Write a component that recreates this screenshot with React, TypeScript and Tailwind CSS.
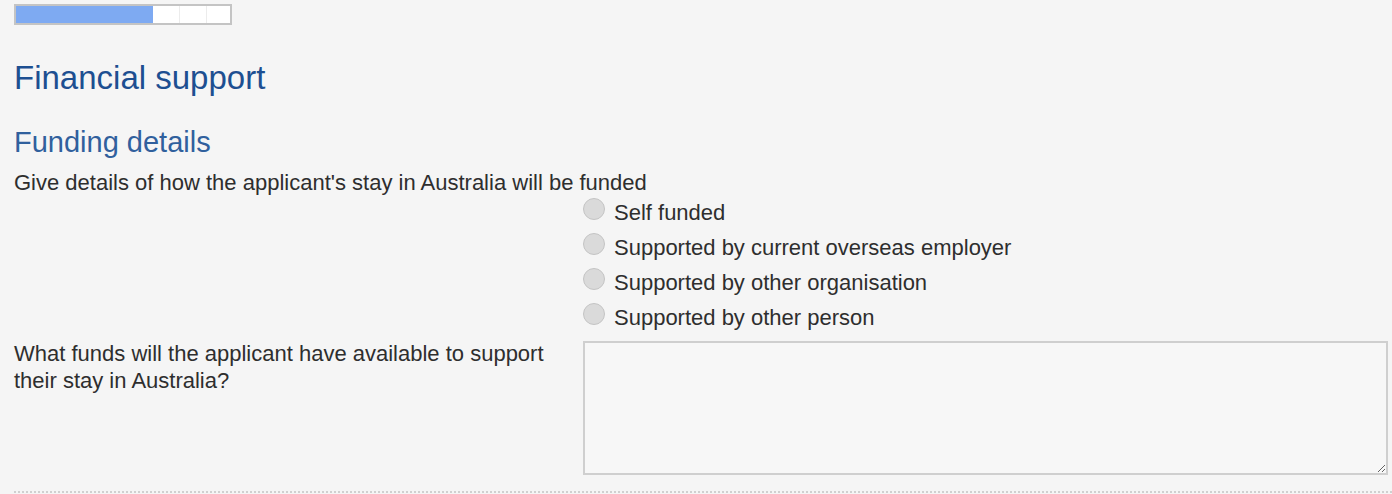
import React from "react";

const options = [
  "Self funded",
  "Supported by current overseas employer",
  "Supported by other organisation",
  "Supported by other person",
];

export default function App() {
  return (
    <div
      className="w-[1392px] h-[494px] overflow-hidden bg-[#f5f5f5] text-[#2e2e2e]"
      style={{ fontFamily: '"Liberation Sans", Arial, sans-serif' }}
    >
      <div className="pl-[14px] pt-[4px]">
        {/* progress bar */}
        <div className="flex w-[218px] h-[21px] border-2 border-[#c4c4c4] bg-white">
          <div className="w-[137px] h-full bg-[#7eaaf2]" />
          <div className="w-[27px] h-full border-r border-[#ececec]" />
          <div className="w-[27px] h-full border-r border-[#ececec]" />
          <div className="flex-1 h-full" />
        </div>

        <h1 className="mt-[33px] text-[33px] leading-[40px] text-[#1d4f91]">Financial support</h1>
        <h2 className="mt-[27px] text-[29px] leading-[34px] text-[#30609d]">Funding details</h2>
        <p className="mt-[12px] text-[22px] leading-[24px]">
          Give details of how the applicant's stay in Australia will be funded
        </p>

        <div className="flex">
          <div className="w-[569px] shrink-0" />
          <div className="flex flex-col">
            {options.map((o) => (
              <label key={o} className="flex items-center h-[35px] text-[22px] leading-[25px]">
                <span className="w-[22px] h-[22px] rounded-full border border-[#c4c4c4] bg-[#dadada] mr-[9px] -mt-[8px]" />
                <span>{o}</span>
              </label>
            ))}
          </div>
        </div>

        <div className="flex mt-[6px]">
          <div className="w-[569px] shrink-0 -mt-[1px] text-[22px] leading-[27px] pr-[20px]">
            What funds will the applicant have available to support their stay in Australia?
          </div>
          <textarea className="w-[805px] h-[134px] border-2 border-[#cfcfcf] bg-[#f7f7f7] resize" />
        </div>

        <div className="mt-[16px] border-t-2 border-dotted border-[#d0d0d0] w-[1378px]" />
      </div>
    </div>
  );
}
